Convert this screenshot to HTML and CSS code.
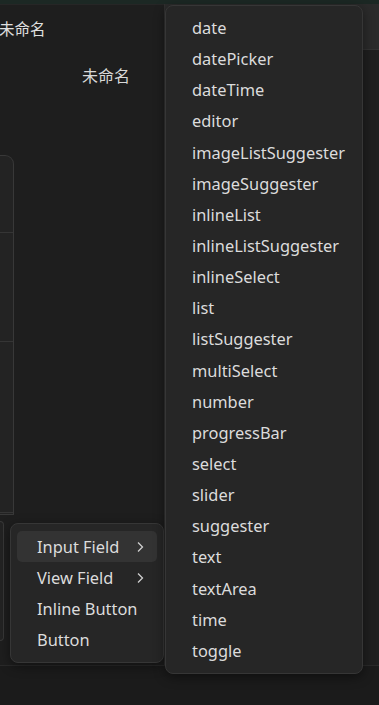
FILE: index.html
```html
<!DOCTYPE html>
<html lang="zh">

<head>
  <meta charset="UTF-8">
  <meta name="viewport" content="width=device-width, initial-scale=1.0">
  <title>未命名</title>
  <link rel="stylesheet" href="styles.css">
</head>

<body>
  <div class="titlebar"></div>

  <div class="workspace">
    <div class="main-pane">
      <div class="tab-row">
        <span class="tab-title">未命名</span>
      </div>
      <div class="view-header">未命名</div>
      <div class="view-body">
        <div class="side-box">
          <div class="side-box-row row-a"></div>
          <div class="side-box-row row-b"></div>
          <div class="side-box-row row-c"></div>
        </div>
        <div class="side-box small"></div>
      </div>
    </div>
    <div class="side-pane">
      <div class="side-header"></div>
    </div>
  </div>

  <div class="statusbar"></div>

  <div class="menu context-menu">
    <div class="menu-item selected">
      <span>Input Field</span>
      <svg class="chevron" width="8" height="12" viewBox="0 0 8 12"><polyline points="2,1.5 6.5,6 2,10.5" /></svg>
    </div>
    <div class="menu-item">
      <span>View Field</span>
      <svg class="chevron" width="8" height="12" viewBox="0 0 8 12"><polyline points="2,1.5 6.5,6 2,10.5" /></svg>
    </div>
    <div class="menu-item"><span>Inline Button</span></div>
    <div class="menu-item"><span>Button</span></div>
  </div>

  <div class="menu submenu">
    <div class="menu-item">date</div>
    <div class="menu-item">datePicker</div>
    <div class="menu-item">dateTime</div>
    <div class="menu-item">editor</div>
    <div class="menu-item">imageListSuggester</div>
    <div class="menu-item">imageSuggester</div>
    <div class="menu-item">inlineList</div>
    <div class="menu-item">inlineListSuggester</div>
    <div class="menu-item">inlineSelect</div>
    <div class="menu-item">list</div>
    <div class="menu-item">listSuggester</div>
    <div class="menu-item">multiSelect</div>
    <div class="menu-item">number</div>
    <div class="menu-item">progressBar</div>
    <div class="menu-item">select</div>
    <div class="menu-item">slider</div>
    <div class="menu-item">suggester</div>
    <div class="menu-item">text</div>
    <div class="menu-item">textArea</div>
    <div class="menu-item">time</div>
    <div class="menu-item">toggle</div>
  </div>
</body>

</html>
```

FILE: styles.css
```css
:root {
  --bg-base: #1b1b1b;
  --bg-pane: #1e1e1e;
  --bg-menu: #262626;
  --border: #363636;
  --text: #dcdcdc;
}

* {
  box-sizing: border-box;
}

body {
  margin: 0;
  width: 379px;
  height: 705px;
  overflow: hidden;
  position: relative;
  background: var(--bg-base);
  color: var(--text);
  font-family: 'Noto Sans', 'Noto Sans CJK SC', sans-serif;
}

.titlebar {
  height: 4px;
  background: #1c2824;
}

.workspace {
  display: flex;
  height: 661px;
}

.main-pane {
  width: 165px;
  background: var(--bg-pane);
  border-right: 1px solid #303030;
  display: flex;
  flex-direction: column;
}

.tab-row {
  height: 46px;
  display: flex;
  align-items: center;
  padding-top: 2px;
  border-top: 1px solid #262626;
}

.tab-title {
  font-size: 15.5px;
  margin-left: -1px;
  color: #e0e0e0;
}

.view-header {
  height: 50px;
  padding-left: 82px;
  padding-top: 13px;
  font-size: 16px;
  color: #d8d8d8;
}

.view-body {
  flex: 1;
  padding-top: 55px;
  display: flex;
  flex-direction: column;
  gap: 6px;
}

.side-box {
  width: 14px;
  height: 360px;
  background: #232323;
  border: 1px solid #383838;
  border-left: none;
  border-radius: 0 9px 0 0;
  display: flex;
  flex-direction: column;
}

.side-box.small {
  width: 4px;
  height: 120px;
  border-radius: 0 4px 4px 0;
}

.side-box-row {
  border-bottom: 1px solid #353535;
}

.row-a {
  height: 77px;
}

.row-b {
  height: 109px;
}

.row-c {
  height: 171px;
}

.side-pane {
  flex: 1;
  background: #1f1f1f;
}

.side-header {
  height: 46px;
  background: #2b2b2b;
  border-bottom: 1px solid #333;
}

.statusbar {
  height: 40px;
  background: var(--bg-base);
  border-top: 1px solid #2a2a2a;
}

/* menus */
.menu {
  position: absolute;
  background: var(--bg-menu);
  border: 1px solid var(--border);
  border-radius: 8px;
  padding: 7px 6px;
  box-shadow: 0 3px 12px rgba(0, 0, 0, 0.45);
}

.menu-item {
  height: 31px;
  display: flex;
  align-items: center;
  justify-content: space-between;
  padding: 0 13px 0 20px;
  border-radius: 5px;
  font-size: 16.4px;
  white-space: nowrap;
}

.menu-item.selected {
  background: #333333;
}

.chevron {
  fill: none;
  stroke: #cfcfcf;
  stroke-width: 1.3;
}

.context-menu {
  left: 10px;
  top: 523px;
  width: 154px;
  height: 140px;
}

.submenu {
  left: 165px;
  top: 5px;
  width: 198px;
  height: 669px;
  padding-top: 6px;
}

.submenu .menu-item {
  height: 31.15px;
  padding-left: 20px;
}
```
